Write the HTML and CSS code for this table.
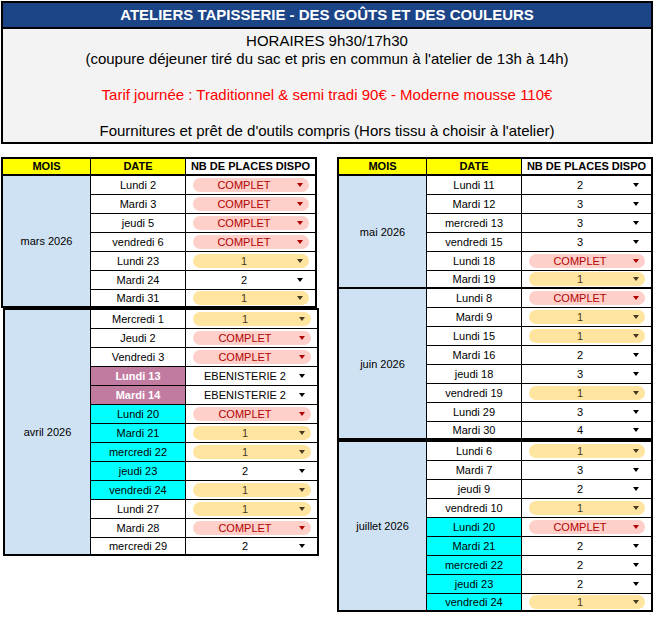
FILE: index.html
```html
<!DOCTYPE html>
<html lang="fr">
<head>
<meta charset="utf-8">
<title>Ateliers Tapisserie</title>
<link rel="stylesheet" href="styles.css">
</head>
<body>
<div class="page">
  <div class="banner">
    <div class="title">ATELIERS TAPISSERIE - DES GOÛTS ET DES COULEURS</div>
    <div class="info">
      <div>HORAIRES 9h30/17h30</div>
      <div>(coupure déjeuner tiré du sac et pris en commun à l'atelier de 13h à 14h)</div>
      <div>&nbsp;</div>
      <div class="red">Tarif journée : Traditionnel &amp; semi tradi 90€ - Moderne mousse 110€</div>
      <div>&nbsp;</div>
      <div>Fournitures et prêt de d'outils compris (Hors tissu à choisir à l'atelier)</div>
    </div>
  </div>

  <div class="tables">
    <!-- LEFT TABLE -->
    <div class="table">
      <div class="thead">
        <div class="th mois-h">MOIS</div>
        <div class="th date-h">DATE</div>
        <div class="th nb-h">NB DE PLACES DISPO</div>
      </div>

      <div class="block">
        <div class="mois">mars 2026</div>
        <div class="rows">
          <div class="row"><div class="date">Lundi 2</div><div class="nb"><div class="chip red"><span class="v">COMPLET</span><span class="arr"></span></div></div></div>
          <div class="row"><div class="date">Mardi 3</div><div class="nb"><div class="chip red"><span class="v">COMPLET</span><span class="arr"></span></div></div></div>
          <div class="row"><div class="date">jeudi 5</div><div class="nb"><div class="chip red"><span class="v">COMPLET</span><span class="arr"></span></div></div></div>
          <div class="row"><div class="date">vendredi 6</div><div class="nb"><div class="chip red"><span class="v">COMPLET</span><span class="arr"></span></div></div></div>
          <div class="row"><div class="date">Lundi 23</div><div class="nb"><div class="chip yel"><span class="v">1</span><span class="arr"></span></div></div></div>
          <div class="row"><div class="date">Mardi 24</div><div class="nb"><div class="chip"><span class="v">2</span><span class="arr"></span></div></div></div>
          <div class="row"><div class="date">Mardi 31</div><div class="nb"><div class="chip yel"><span class="v">1</span><span class="arr"></span></div></div></div>
        </div>
      </div>

      <div class="block top shift">
        <div class="mois">avril 2026</div>
        <div class="rows">
          <div class="row"><div class="date">Mercredi 1</div><div class="nb"><div class="chip yel"><span class="v">1</span><span class="arr"></span></div></div></div>
          <div class="row"><div class="date">Jeudi 2</div><div class="nb"><div class="chip red"><span class="v">COMPLET</span><span class="arr"></span></div></div></div>
          <div class="row"><div class="date">Vendredi 3</div><div class="nb"><div class="chip red"><span class="v">COMPLET</span><span class="arr"></span></div></div></div>
          <div class="row"><div class="date mauve">Lundi 13</div><div class="nb"><div class="chip"><span class="v">EBENISTERIE 2</span><span class="arr"></span></div></div></div>
          <div class="row"><div class="date mauve">Mardi 14</div><div class="nb"><div class="chip"><span class="v">EBENISTERIE 2</span><span class="arr"></span></div></div></div>
          <div class="row"><div class="date cyan">Lundi 20</div><div class="nb"><div class="chip red"><span class="v">COMPLET</span><span class="arr"></span></div></div></div>
          <div class="row"><div class="date cyan">Mardi 21</div><div class="nb"><div class="chip yel"><span class="v">1</span><span class="arr"></span></div></div></div>
          <div class="row"><div class="date cyan">mercredi 22</div><div class="nb"><div class="chip yel"><span class="v">1</span><span class="arr"></span></div></div></div>
          <div class="row"><div class="date cyan">jeudi 23</div><div class="nb"><div class="chip"><span class="v">2</span><span class="arr"></span></div></div></div>
          <div class="row"><div class="date cyan">vendredi 24</div><div class="nb"><div class="chip yel"><span class="v">1</span><span class="arr"></span></div></div></div>
          <div class="row"><div class="date">Lundi 27</div><div class="nb"><div class="chip yel"><span class="v">1</span><span class="arr"></span></div></div></div>
          <div class="row"><div class="date">Mardi 28</div><div class="nb"><div class="chip red"><span class="v">COMPLET</span><span class="arr"></span></div></div></div>
          <div class="row"><div class="date">mercredi 29</div><div class="nb"><div class="chip"><span class="v">2</span><span class="arr"></span></div></div></div>
        </div>
      </div>
    </div>

    <!-- RIGHT TABLE -->
    <div class="table">
      <div class="thead">
        <div class="th mois-h">MOIS</div>
        <div class="th date-h">DATE</div>
        <div class="th nb-h">NB DE PLACES DISPO</div>
      </div>

      <div class="block">
        <div class="mois">mai 2026</div>
        <div class="rows">
          <div class="row"><div class="date">Lundi 11</div><div class="nb"><div class="chip"><span class="v">2</span><span class="arr"></span></div></div></div>
          <div class="row"><div class="date">Mardi 12</div><div class="nb"><div class="chip"><span class="v">3</span><span class="arr"></span></div></div></div>
          <div class="row"><div class="date">mercredi 13</div><div class="nb"><div class="chip"><span class="v">3</span><span class="arr"></span></div></div></div>
          <div class="row"><div class="date">vendredi 15</div><div class="nb"><div class="chip"><span class="v">3</span><span class="arr"></span></div></div></div>
          <div class="row"><div class="date">Lundi 18</div><div class="nb"><div class="chip red"><span class="v">COMPLET</span><span class="arr"></span></div></div></div>
          <div class="row"><div class="date">Mardi 19</div><div class="nb"><div class="chip yel"><span class="v">1</span><span class="arr"></span></div></div></div>
        </div>
      </div>

      <div class="block">
        <div class="mois">juin 2026</div>
        <div class="rows">
          <div class="row"><div class="date">Lundi 8</div><div class="nb"><div class="chip red"><span class="v">COMPLET</span><span class="arr"></span></div></div></div>
          <div class="row"><div class="date">Mardi 9</div><div class="nb"><div class="chip yel"><span class="v">1</span><span class="arr"></span></div></div></div>
          <div class="row"><div class="date">Lundi 15</div><div class="nb"><div class="chip yel"><span class="v">1</span><span class="arr"></span></div></div></div>
          <div class="row"><div class="date">Mardi 16</div><div class="nb"><div class="chip"><span class="v">2</span><span class="arr"></span></div></div></div>
          <div class="row"><div class="date">jeudi 18</div><div class="nb"><div class="chip"><span class="v">3</span><span class="arr"></span></div></div></div>
          <div class="row"><div class="date">vendredi 19</div><div class="nb"><div class="chip yel"><span class="v">1</span><span class="arr"></span></div></div></div>
          <div class="row"><div class="date">Lundi 29</div><div class="nb"><div class="chip"><span class="v">3</span><span class="arr"></span></div></div></div>
          <div class="row"><div class="date">Mardi 30</div><div class="nb"><div class="chip"><span class="v">4</span><span class="arr"></span></div></div></div>
        </div>
      </div>

      <div class="block top">
        <div class="mois">juillet 2026</div>
        <div class="rows">
          <div class="row"><div class="date">Lundi 6</div><div class="nb"><div class="chip yel"><span class="v">1</span><span class="arr"></span></div></div></div>
          <div class="row"><div class="date">Mardi 7</div><div class="nb"><div class="chip"><span class="v">3</span><span class="arr"></span></div></div></div>
          <div class="row"><div class="date">jeudi 9</div><div class="nb"><div class="chip"><span class="v">2</span><span class="arr"></span></div></div></div>
          <div class="row"><div class="date">vendredi 10</div><div class="nb"><div class="chip yel"><span class="v">1</span><span class="arr"></span></div></div></div>
          <div class="row"><div class="date cyan">Lundi 20</div><div class="nb"><div class="chip red"><span class="v">COMPLET</span><span class="arr"></span></div></div></div>
          <div class="row"><div class="date cyan">Mardi 21</div><div class="nb"><div class="chip"><span class="v">2</span><span class="arr"></span></div></div></div>
          <div class="row"><div class="date cyan">mercredi 22</div><div class="nb"><div class="chip"><span class="v">2</span><span class="arr"></span></div></div></div>
          <div class="row"><div class="date cyan">jeudi 23</div><div class="nb"><div class="chip"><span class="v">2</span><span class="arr"></span></div></div></div>
          <div class="row"><div class="date cyan">vendredi 24</div><div class="nb"><div class="chip yel"><span class="v">1</span><span class="arr"></span></div></div></div>
        </div>
      </div>
    </div>
  </div>
</div>
</body>
</html>
```
FILE: styles.css
```css
* { box-sizing: border-box; }

html, body {
  margin: 0;
  padding: 0;
  background: #ffffff;
}

body {
  font-family: "Liberation Sans", Arial, sans-serif;
  color: #000000;
}

.page {
  padding: 1px;
  width: 656px;
}

.banner {
  width: 652px;
  border: 2px solid #000;
}

.title {
  height: 26px;
  background: #1c4587;
  border-bottom: 2px solid #000;
  color: #ffffff;
  font-weight: bold;
  font-size: 15px;
  line-height: 24px;
  text-align: center;
}

.info {
  background: #f3f3f3;
  padding: 3px 0 2px;
  font-size: 15px;
  line-height: 18px;
  text-align: center;
}

.info .red {
  color: #ff0000;
}

.tables {
  display: flex;
  gap: 20px;
  margin-top: 13px;
  align-items: flex-start;
}

.table {
  width: 316px;
  display: flex;
  flex-direction: column;
}

.thead {
  display: flex;
  height: 19px;
  border: 2px solid #000;
}

.th {
  font-size: 11px;
  font-weight: bold;
  line-height: 15px;
  text-align: center;
}

.mois-h {
  width: 88px;
  background: #ffff00;
  border-right: 1px solid #000;
}

.date-h {
  width: 95px;
  background: #ffff00;
  border-right: 1px solid #000;
}

.nb-h {
  flex: 1;
  background: #ffffff;
}

.block {
  display: flex;
  border: 2px solid #000;
  border-top: 0;
}

.block.top {
  border-top: 2px solid #000;
}

.block.shift {
  margin-left: 2px;
  margin-right: -2px;
}

.mois {
  width: 88px;
  flex: none;
  background: #cfe2f3;
  border-right: 1px solid #000;
  display: flex;
  align-items: center;
  justify-content: center;
  font-size: 11px;
}

.block.shift .mois {
  width: 86px;
}

.rows {
  flex: 1;
  display: flex;
  flex-direction: column;
}

.row {
  display: flex;
  height: 19px;
  border-bottom: 1px solid #000;
}

.row:last-child {
  height: 16px;
  border-bottom: 0;
}

.date {
  width: 95px;
  flex: none;
  border-right: 1px solid #000;
  font-size: 11px;
  display: flex;
  align-items: center;
  justify-content: center;
  background: #ffffff;
}

.date.cyan {
  background: #00ffff;
}

.date.mauve {
  background: #c27ba0;
  color: #ffffff;
  font-weight: bold;
}

.nb {
  flex: 1;
  display: flex;
  align-items: center;
  padding: 0 6px 0 7px;
}

.chip {
  flex: 1;
  height: 14px;
  border-radius: 7px;
  display: flex;
  align-items: center;
  padding-right: 6px;
  font-size: 11px;
  color: #000;
}

.chip .v {
  flex: 1;
  text-align: center;
  line-height: 14px;
}

.chip .arr {
  width: 0;
  height: 0;
  margin-left: 2px;
  border-left: 3px solid transparent;
  border-right: 3px solid transparent;
  border-top: 4px solid #000;
}

.chip.red {
  background: #ffcfc9;
  color: #b10202;
}

.chip.red .arr {
  border-top-color: #b10202;
}

.chip.yel {
  background: #ffe5a0;
  color: #473821;
}

.chip.yel .arr {
  border-top-color: #473821;
}
```
